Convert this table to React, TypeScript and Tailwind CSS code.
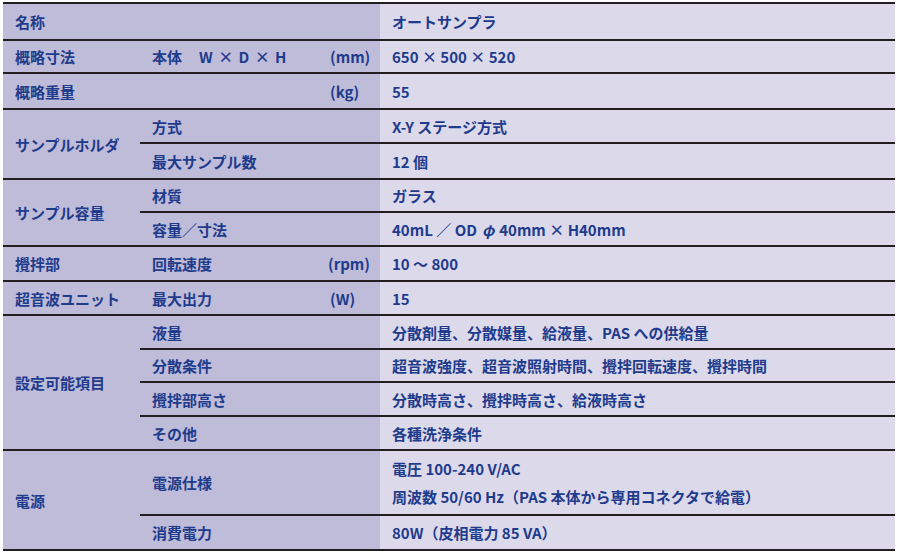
import React from 'react'

const line = 'border-t-2 border-[#231f20]'
const label = `${line} bg-[#bebcd9] flex items-center pl-3`
const value = `${line} bg-[#dcd9eb] flex items-center pl-3`

function Label({ children, className = '' }: { children?: React.ReactNode; className?: string }) {
  return <div className={`${label} ${className}`}>{children}</div>
}

function Value({ children, className = '' }: { children?: React.ReactNode; className?: string }) {
  return <div className={`${value} ${className}`}>{children}</div>
}

export default function App() {
  return (
    <div className="w-[899px] h-[556px] bg-white pt-[2px] pl-[3px]">
      <div
        className="grid w-[892px] grid-cols-[137px_180px_60px_515px] grid-rows-[37px_33px_36px_34px_36px_33px_34px_35px_34px_34px_33px_34px_34px_65px_35px] border-b-2 border-[#231f20] text-[15px] font-bold leading-none text-[#1f3b8c]"
        style={{ fontFamily: '"Noto Sans CJK JP", "Noto Sans", sans-serif' }}
      >
        {/* 名称 */}
        <Label className="col-span-3">名称</Label>
        <Value>オートサンプラ</Value>

        {/* 概略寸法 */}
        <Label>概略寸法</Label>
        <Label>
          本体<span className="ml-[17px] tracking-[1px]">W × D × H</span>
        </Label>
        <Label className="pl-[10px] font-semibold">(mm)</Label>
        <Value>650 × 500 × 520</Value>

        {/* 概略重量 */}
        <Label className="col-span-2">概略重量</Label>
        <Label className="pl-[10px] font-semibold">(kg)</Label>
        <Value>55</Value>

        {/* サンプルホルダ */}
        <Label className="row-span-2">サンプルホルダ</Label>
        <Label className="col-span-2">方式</Label>
        <Value>X-Y ステージ方式</Value>
        <Label className="col-span-2">最大サンプル数</Label>
        <Value>12 個</Value>

        {/* サンプル容量 */}
        <Label className="row-span-2">サンプル容量</Label>
        <Label className="col-span-2">材質</Label>
        <Value>ガラス</Value>
        <Label className="col-span-2">容量／寸法</Label>
        <Value>40mL ／ OD <span className="mx-[5px] italic">φ</span>40mm × H40mm</Value>

        {/* 攪拌部 */}
        <Label>攪拌部</Label>
        <Label>回転速度</Label>
        <Label className="pl-[8px] font-semibold">(rpm)</Label>
        <Value>10 ～ 800</Value>

        {/* 超音波ユニット */}
        <Label>超音波ユニット</Label>
        <Label>最大出力</Label>
        <Label className="pl-[10px] font-semibold">(W)</Label>
        <Value>15</Value>

        {/* 設定可能項目 */}
        <Label className="row-span-4">設定可能項目</Label>
        <Label className="col-span-2">液量</Label>
        <Value>分散剤量、分散媒量、給液量、PAS への供給量</Value>
        <Label className="col-span-2">分散条件</Label>
        <Value>超音波強度、超音波照射時間、攪拌回転速度、攪拌時間</Value>
        <Label className="col-span-2">攪拌部高さ</Label>
        <Value>分散時高さ、攪拌時高さ、給液時高さ</Value>
        <Label className="col-span-2">その他</Label>
        <Value>各種洗浄条件</Value>

        {/* 電源 */}
        <Label className="row-span-2">電源</Label>
        <Label className="col-span-2">電源仕様</Label>
        <Value className="flex-col !items-start justify-center gap-[13px]">
          <span>電圧 100-240 V/AC</span>
          <span>周波数 50/60 Hz（PAS 本体から専用コネクタで給電）</span>
        </Value>
        <Label className="col-span-2">消費電力</Label>
        <Value>80W（皮相電力 85 VA）</Value>
      </div>
    </div>
  )
}
